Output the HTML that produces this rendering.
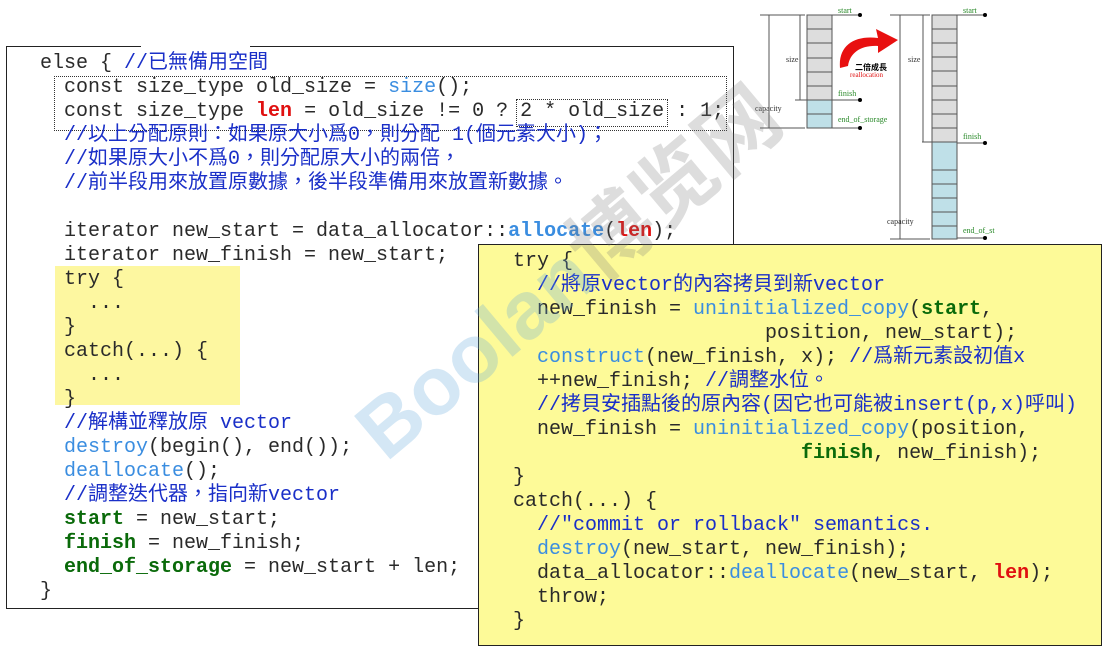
<!DOCTYPE html>
<html><head><meta charset="utf-8"><style>
body{margin:0;width:1108px;height:638px;background:#fff;position:relative;overflow:hidden;font-family:"Liberation Mono","Noto Sans CJK TC",monospace;font-size:20px;color:#2a2a2a}
.box{position:absolute;border:1.5px solid #222}
.l{position:absolute;white-space:pre;line-height:24px;height:24px}
.c{color:#1a2fc8}
.f{color:#3a8de0}
.r{color:#e01010;font-weight:bold}
.g{color:#0a6a0a;font-weight:bold}
</style></head><body>
<div class="box" style="left:6px;top:46px;width:726px;height:562px;border-top:none"></div>
<div style="position:absolute;left:6px;top:46px;width:135px;border-top:1.5px solid #222"></div>
<div style="position:absolute;left:250px;top:46px;width:483px;border-top:1.5px solid #222"></div>
<div style="position:absolute;left:55px;top:266px;width:185px;height:139px;background:#fdf7a0"></div>
<div style="position:absolute;left:54px;top:76px;width:671px;height:53px;border:1px dotted #333"></div>
<div style="position:absolute;left:516px;top:99px;width:150px;height:26px;border:1px dotted #333"></div>
<div style="position:absolute;left:40px;top:52px">
<div class="l" style="top:0">else { <span class="c">//已無備用空間</span></div>
<div class="l" style="top:24px">  const size_type old_size = <span class="f">size</span>();</div>
<div class="l" style="top:48px">  const size_type <span class="r">len</span> = old_size != 0 ? 2 * old_size : 1;</div>
<div class="l c" style="top:72px">  //以上分配原則：如果原大小爲0，則分配 1(個元素大小)；</div>
<div class="l c" style="top:96px">  //如果原大小不爲0，則分配原大小的兩倍，</div>
<div class="l c" style="top:120px">  //前半段用來放置原數據，後半段準備用來放置新數據。</div>
<div class="l" style="top:168px">  iterator new_start = data_allocator::<span class="f" style="font-weight:bold">allocate</span>(<span class="r">len</span>);</div>
<div class="l" style="top:192px">  iterator new_finish = new_start;</div>
<div class="l" style="top:216px">  try {</div>
<div class="l" style="top:240px">    ...</div>
<div class="l" style="top:264px">  }</div>
<div class="l" style="top:288px">  catch(...) {</div>
<div class="l" style="top:312px">    ...</div>
<div class="l" style="top:336px">  }</div>
<div class="l c" style="top:360px">  //解構並釋放原 vector</div>
<div class="l" style="top:384px">  <span class="f">destroy</span>(begin(), end());</div>
<div class="l" style="top:408px">  <span class="f">deallocate</span>();</div>
<div class="l c" style="top:432px">  //調整迭代器，指向新vector</div>
<div class="l" style="top:456px">  <span class="g">start</span> = new_start;</div>
<div class="l" style="top:480px">  <span class="g">finish</span> = new_finish;</div>
<div class="l" style="top:504px">  <span class="g">end_of_storage</span> = new_start + len;</div>
<div class="l" style="top:528px">}</div>
</div>
<div class="box" style="left:478px;top:244px;width:622px;height:400px;background:#fdfa98"></div>
<div style="position:absolute;left:513px;top:250px">
<div class="l" style="top:0">try {</div>
<div class="l c" style="top:24px">  //將原vector的內容拷貝到新vector</div>
<div class="l" style="top:48px">  new_finish = <span class="f">uninitialized_copy</span>(<span class="g">start</span>,</div>
<div class="l" style="top:72px">                     position, new_start);</div>
<div class="l" style="top:96px">  <span class="f">construct</span>(new_finish, x); <span class="c">//爲新元素設初值x</span></div>
<div class="l" style="top:120px">  ++new_finish; <span class="c">//調整水位。</span></div>
<div class="l c" style="top:144px">  //拷貝安插點後的原內容(因它也可能被insert(p,x)呼叫)</div>
<div class="l" style="top:168px">  new_finish = <span class="f">uninitialized_copy</span>(position,</div>
<div class="l" style="top:192px">                        <span class="g">finish</span>, new_finish);</div>
<div class="l" style="top:216px">}</div>
<div class="l" style="top:240px">catch(...) {</div>
<div class="l c" style="top:264px">  //"commit or rollback" semantics.</div>
<div class="l" style="top:288px">  <span class="f">destroy</span>(new_start, new_finish);</div>
<div class="l" style="top:312px">  data_allocator::<span class="f">deallocate</span>(new_start, <span class="r">len</span>);</div>
<div class="l" style="top:336px">  throw;</div>
<div class="l" style="top:360px">}</div>
</div>
<svg style="position:absolute;left:750px;top:0" width="358" height="244">
<g stroke="#555" stroke-width="1" fill="#ddd">
<rect x="57" y="15" width="25" height="85"/>
<line x1="57" y1="29" x2="82" y2="29"/><line x1="57" y1="43" x2="82" y2="43"/><line x1="57" y1="58" x2="82" y2="58"/><line x1="57" y1="72" x2="82" y2="72"/><line x1="57" y1="86" x2="82" y2="86"/>
<rect x="57" y="100" width="25" height="28" fill="#bfe0e8"/><line x1="57" y1="114" x2="82" y2="114"/>
<rect x="182" y="15" width="25" height="127"/>
<line x1="182" y1="29" x2="207" y2="29"/><line x1="182" y1="43" x2="207" y2="43"/><line x1="182" y1="57" x2="207" y2="57"/><line x1="182" y1="71" x2="207" y2="71"/><line x1="182" y1="86" x2="207" y2="86"/><line x1="182" y1="100" x2="207" y2="100"/><line x1="182" y1="114" x2="207" y2="114"/><line x1="182" y1="128" x2="207" y2="128"/>
<rect x="182" y="142" width="25" height="97" fill="#bfe0e8"/>
<line x1="182" y1="170" x2="207" y2="170"/><line x1="182" y1="184" x2="207" y2="184"/><line x1="182" y1="198" x2="207" y2="198"/><line x1="182" y1="212" x2="207" y2="212"/><line x1="182" y1="226" x2="207" y2="226"/>
<line x1="10" y1="15" x2="55" y2="15"/><line x1="10" y1="128" x2="55" y2="128"/><line x1="19" y1="15" x2="19" y2="128"/>
<line x1="45" y1="100" x2="57" y2="100"/><line x1="50" y1="15" x2="50" y2="100"/>
<line x1="140" y1="15" x2="180" y2="15"/><line x1="140" y1="239" x2="180" y2="239"/><line x1="150" y1="15" x2="150" y2="239"/>
<line x1="172" y1="142" x2="182" y2="142"/><line x1="173" y1="15" x2="173" y2="142"/>
<line x1="82" y1="15" x2="110" y2="15"/><line x1="82" y1="100" x2="110" y2="100"/><line x1="82" y1="128" x2="110" y2="128"/>
<line x1="207" y1="15" x2="235" y2="15"/><line x1="207" y1="143" x2="235" y2="143"/><line x1="207" y1="238" x2="235" y2="238"/>
</g>
<g fill="#000"><circle cx="110" cy="15" r="2"/><circle cx="110" cy="100" r="2"/><circle cx="110" cy="128" r="2"/><circle cx="235" cy="15" r="2"/><circle cx="235" cy="143" r="2"/><circle cx="235" cy="238" r="2"/></g>
<path d="M90 68 C88 45 105 35 128 38 L126 29 L148 40 L128 53 L128 46 C112 45 100 52 98 66 Z" fill="#e81010"/>
<g font-family="Liberation Serif,serif" font-size="8" fill="#333"><text x="36" y="62">size</text><text x="5" y="111">capacity</text><text x="158" y="62">size</text><text x="137" y="224">capacity</text></g>
<g font-family="Liberation Serif,serif" font-size="8" fill="#2a8a2a"><text x="88" y="13">start</text><text x="88" y="96">finish</text><text x="88" y="122">end_of_storage</text><text x="213" y="13">start</text><text x="213" y="139">finish</text><text x="213" y="233">end_of_st</text></g>
<text x="105" y="70" font-family="Noto Sans CJK TC,sans-serif" font-size="8" font-weight="bold">二倍成長</text>
<text x="100" y="77" font-family="Liberation Serif,serif" font-size="7" fill="#e01010">reallocation</text>
</svg>
<div style="position:absolute;left:325px;top:390px;transform:rotate(-40deg);transform-origin:left top;font-family:'Liberation Sans',sans-serif;font-weight:bold;font-size:82px;color:rgba(100,170,220,0.28);white-space:nowrap">Boolan<span style="font-family:'Noto Sans CJK SC',sans-serif;color:rgba(120,120,120,0.25)">博览网</span></div>
</body></html>
